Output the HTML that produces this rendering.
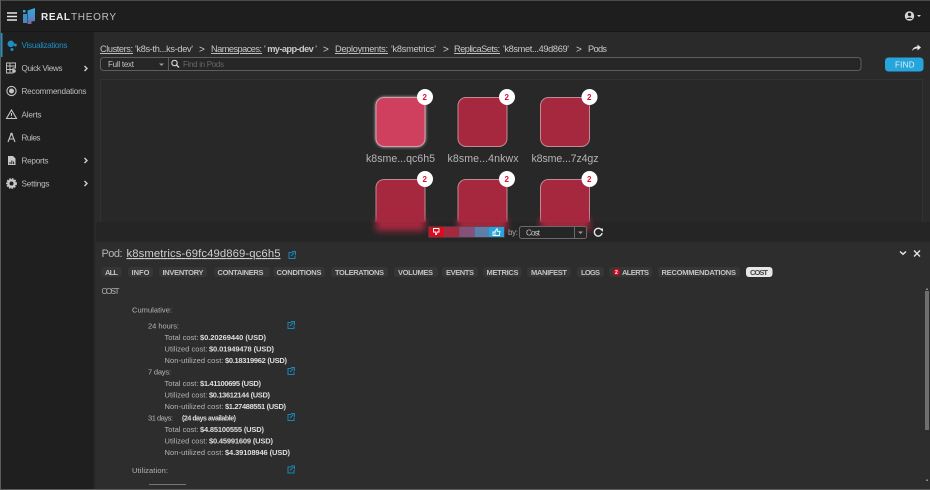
<!DOCTYPE html>
<html lang="en"><head><meta charset="utf-8"><title>RealTheory</title>
<style>
html,body{margin:0;padding:0;background:#2a2a2a;width:930px;height:490px;overflow:hidden}
svg{display:block;filter:blur(.35px)}
text{font-family:"Liberation Sans",sans-serif;font-size:8px;fill:#c8c8c8}
.nav{font-size:8.2px;fill:#bdbdbd}
.bc{font-size:9.2px;fill:#c9c9c9}
.gt{font-size:10px;fill:#c9c9c9}
.u{text-decoration:underline}
.tab{font-size:7.5px;font-weight:bold;fill:#c2c2c2}
.c{font-size:7.5px;fill:#b5b5b5}
.b{font-size:7.5px;font-weight:bold;fill:#dedede}
.pl{font-size:10.6px;fill:#b5b5b5}
.ic{fill:none;stroke:#c4c4c4;stroke-width:1.1}
.l{fill:none;stroke:#1a85b5;stroke-width:1}
</style></head><body>
<svg width="930" height="490" viewBox="0 0 930 490" xmlns="http://www.w3.org/2000/svg">
<defs><filter id="bl" x="-40%" y="-60%" width="180%" height="220%"><feGaussianBlur stdDeviation="3.500"/></filter>
<filter id="gl" x="-30%" y="-30%" width="160%" height="160%"><feGaussianBlur stdDeviation="1.600"/></filter>
<linearGradient id="lg" x1="0" y1="0" x2="0" y2="1"><stop offset="0" stop-color="#2fa8e0"/><stop offset=".6" stop-color="#4c8cc6"/><stop offset="1" stop-color="#8a5f96"/></linearGradient></defs>
<rect width="930" height="490" fill="#2a2a2a"/>
<!-- top bar -->
<rect width="930" height="32" fill="#1e1e1e"/><rect width="930" height="1" fill="#4a4a4a"/><rect y="31" width="930" height="1" fill="#171717"/>
<path d="M7 13h10M7 16.500h10M7 20h10" stroke="#e6e6e6" stroke-width="1.500"/>
<rect x="23" y="10" width="2.500" height="2.500" fill="#42a5d8"/><rect x="23" y="14" width="4" height="9" fill="#3b8fc4"/>
<path d="M27.500 10.500 L35 8 V21 L31.500 21.500 V24 H27.500Z" fill="url(#lg)"/>
<text x="41" y="20" textLength="29" style="font-size:10px;fill:#ececec;font-weight:bold">REAL</text>
<text x="71" y="20" textLength="45" style="font-size:10px;fill:#c0c0c0">THEORY</text>
<circle cx="909.500" cy="16" r="4.700" fill="#d6d6d6"/><circle cx="909.500" cy="14.500" r="1.700" fill="#1e1e1e"/><path d="M906.500 19c.6-2 5.400-2 6 0" fill="#1e1e1e"/><path d="M917 15h4l-2 2z" fill="#d6d6d6"/>
<!-- sidebar -->
<rect y="32" width="94" height="458" fill="#1f1f1f"/><rect y="0" width="1" height="490" fill="#5c5c5c"/><rect x="1" y="33" width="1.500" height="24" fill="#1c93cc"/>
<circle cx="10.800" cy="43.800" r="3.300" fill="#1b8fc4"/><circle cx="15.300" cy="45" r="1.500" fill="#1b8fc4"/><circle cx="12" cy="49.500" r="1.500" fill="#1b8fc4"/>
<text x="21.500" y="48" textLength="46" class="nav" style="fill:#1b8fc4">Visualizations</text>
<path class="ic" style="stroke-width:.9" d="M6.500 63h9v5h-2.500v5h-6.500zM6.500 66h9M10 63v10M6.500 69.500h6"/><circle cx="14" cy="71" r="1.800" fill="#c4c4c4"/>
<text x="21.500" y="71" textLength="41" class="nav">Quick Views</text>
<path class="ic" style="stroke-width:1.400;stroke:#d0d0d0" d="M84.500 66l2.500 2.500-2.500 2.500"/>
<circle cx="11.500" cy="91" r="4.600" class="ic"/><circle cx="11.500" cy="91" r="2.500" fill="#c4c4c4"/>
<text x="21.500" y="94" textLength="65" class="nav">Recommendations</text>
<path class="ic" d="M11.500 110l5 8.500h-10zM11.500 113v3M11.500 117v.6"/>
<text x="21.500" y="117.500" textLength="20" class="nav">Alerts</text>
<path class="ic" d="M11.500 133l-3.500 9M11.500 133l3.500 9M9 139h5"/><circle cx="11.500" cy="134" r="1.300" fill="#c4c4c4"/>
<text x="21.500" y="140.500" textLength="19" class="nav">Rules</text>
<path d="M8 156h5l2.500 2.500V165h-7.500z" fill="#c8c8c8"/><path d="M10 164v-2M11.800 164v-3.500M13.600 164v-2.500" stroke="#1f1f1f" stroke-width="1"/>
<text x="21.500" y="163.500" textLength="27" class="nav">Reports</text>
<path class="ic" style="stroke-width:1.400;stroke:#d0d0d0" d="M84.500 158l2.500 2.500-2.500 2.500"/>
<circle cx="11.500" cy="183.500" r="3.200" fill="none" stroke="#c8c8c8" stroke-width="2.400"/><circle cx="11.500" cy="183.500" r="4.700" fill="none" stroke="#c8c8c8" stroke-width="1.400" stroke-dasharray="1.700 1.100"/>
<text x="21.500" y="186.500" textLength="28" class="nav">Settings</text>
<path class="ic" style="stroke-width:1.400;stroke:#d0d0d0" d="M84.500 181l2.500 2.500-2.500 2.500"/>
<!-- breadcrumbs -->
<text x="100" y="52" textLength="33" class="bc u">Clusters:</text>
<text x="135" y="52" textLength="58" class="bc">'k8s-th...ks-dev'</text>
<text x="199" y="52.500" class="gt">&gt;</text>
<text x="211" y="52" textLength="51" class="bc u">Namespaces:</text>
<text x="264" y="52" textLength="53" class="bc">' <tspan font-weight="bold">my-app-dev</tspan> '</text>
<text x="323" y="52.500" class="gt">&gt;</text>
<text x="335" y="52" textLength="53" class="bc u">Deployments:</text>
<text x="391" y="52" textLength="45" class="bc">'k8smetrics'</text>
<text x="443" y="52.500" class="gt">&gt;</text>
<text x="454" y="52" textLength="46" class="bc u">ReplicaSets:</text>
<text x="503" y="52" textLength="66" class="bc">'k8smet...49d869'</text>
<text x="576" y="52.500" class="gt">&gt;</text>
<text x="588" y="52" textLength="19" class="bc">Pods</text>
<path d="M912 51c.6-3 3-4.500 5.500-4.500V44.500l3.500 3-3.500 3v-2c-2 0-4 .6-5.500 2.500z" fill="#e8e8e8"/>
<!-- search -->
<rect x="100.500" y="57.500" width="760.500" height="13" rx="3" fill="#262626" stroke="#5e5e5e"/>
<path d="M168.500 58v12" stroke="#5e5e5e"/>
<text x="108" y="67" textLength="26" style="font-size:8px;fill:#c4c4c4">Full text</text>
<path d="M159 63.500h5l-2.500 2.500z" fill="#9a9a9a"/>
<circle cx="174.500" cy="63" r="2.700" fill="none" stroke="#d0d0d0" stroke-width="1.200"/><path d="M176.500 65l2.500 2.500" stroke="#d0d0d0" stroke-width="1.500"/>
<text x="183" y="67" textLength="41" style="font-size:8px;fill:#686868">Find in Pods</text>
<rect x="885" y="57.500" width="38.500" height="14" rx="3.500" fill="#25a5dc"/>
<text x="895" y="67.500" textLength="19.500" style="font-size:8px;fill:#e4f3fa">FIND</text>
<!-- panel -->
<rect x="100.500" y="79.500" width="822" height="160" fill="#282828" stroke="#323232"/>
<!-- pods -->
<rect x="375.500" y="97" width="50" height="50" rx="9" fill="#fff" opacity=".7" filter="url(#gl)"/>
<rect x="376" y="97.500" width="49" height="49" rx="8" fill="#cf3f5e" stroke="#d4a0ac"/>
<g fill="#a6283f" stroke="#c08a96"><rect x="458" y="97.500" width="49" height="49" rx="8"/><rect x="540.500" y="97.500" width="49" height="49" rx="8"/>
<rect x="376" y="179.500" width="49" height="49" rx="8"/><rect x="458" y="179.500" width="49" height="49" rx="8"/><rect x="540.500" y="179.500" width="49" height="49" rx="8"/></g>
<g fill="#fff"><circle cx="425" cy="97" r="8"/><circle cx="507" cy="97" r="8"/><circle cx="589.500" cy="97" r="8"/><circle cx="425" cy="179" r="8"/><circle cx="507" cy="179" r="8"/><circle cx="589.500" cy="179" r="8"/></g>
<text x="422.500" y="100" style="font-size:8px;font-weight:bold;fill:#d9102d">2</text><text x="504.500" y="100" style="font-size:8px;font-weight:bold;fill:#d9102d">2</text><text x="587" y="100" style="font-size:8px;font-weight:bold;fill:#d9102d">2</text>
<text x="422.500" y="182" style="font-size:8px;font-weight:bold;fill:#d9102d">2</text><text x="504.500" y="182" style="font-size:8px;font-weight:bold;fill:#d9102d">2</text><text x="587" y="182" style="font-size:8px;font-weight:bold;fill:#d9102d">2</text>
<text x="366" y="162" textLength="69" class="pl">k8sme...qc6h5</text>
<text x="447.500" y="162" textLength="71" class="pl">k8sme...4nkwx</text>
<text x="531.500" y="162" textLength="67" class="pl">k8sme...7z4gz</text>
<!-- bottom legend bar -->
<rect x="96" y="222" width="834" height="20" fill="#252525"/>
<g filter="url(#bl)"><rect x="376" y="218" width="49" height="13" fill="#a6283f"/><rect x="458" y="218" width="49" height="13" fill="#a6283f"/><rect x="540.500" y="218" width="49" height="13" fill="#a6283f"/></g>
<rect x="376" y="220" width="49" height="2.500" fill="#a6283f"/><rect x="458" y="220" width="49" height="2.500" fill="#a6283f"/><rect x="540.500" y="220" width="49" height="2.500" fill="#a6283f"/>
<rect x="428.500" y="226.500" width="76" height="11" fill="#555"/>
<rect x="429" y="227" width="15" height="10" fill="#dc0a1e"/><rect x="444.500" y="227" width="14.500" height="10" fill="#a6283f"/><rect x="459.500" y="227" width="14.500" height="10" fill="#85507a"/><rect x="474.500" y="227" width="14.500" height="10" fill="#5c7ea8"/><rect x="489" y="227" width="15" height="10" fill="#26a5dc"/>
<path d="M433.500 228.500h5.500v3.500h-1.800l-.7 2.500h-.8v-2.500h-2.200z" fill="none" stroke="#fff" stroke-width=".9"/>
<path d="M493 232h2v3.500h-2zM495 232l1.500-3h.8v2.300h2.700l-.6 4.200h-4.400" fill="none" stroke="#fff" stroke-width=".9"/>
<text x="508" y="235" textLength="10" style="font-size:8px;fill:#a8a8a8">by:</text>
<rect x="519.500" y="226.500" width="67" height="12" rx="2" fill="#262626" stroke="#6a6a6a"/><path d="M574.500 227v11" stroke="#6a6a6a"/>
<text x="526" y="235.500" textLength="14" style="font-size:8px;fill:#c4c4c4">Cost</text>
<path d="M578 231.500h5l-2.500 2.500z" fill="#9a9a9a"/>
<path d="M601.500 230a3.900 3.900 0 1 0 .6 3" fill="none" stroke="#e4e4e4" stroke-width="1.400"/><path d="M599.500 228.500h3.500v3.500z" fill="#e4e4e4"/>
<!-- pod panel -->
<rect x="96" y="242" width="834" height="248" fill="#2d2d2d"/>
<text x="101.500" y="257" textLength="21" style="font-size:11px;fill:#b5b5b5">Pod:</text>
<text x="126.500" y="257" textLength="154" style="font-size:11.300px;fill:#cfcfcf;text-decoration:underline">k8smetrics-69fc49d869-qc6h5</text>
<g class="l"><path d="M292.500 252.500h-3.500v6h6v-3M291 256l3.500-3.500M292 251.500h3.500v3.500"/></g>
<path d="M900 251.500l3 2.700 3-2.700" fill="none" stroke="#e4e4e4" stroke-width="1.500"/>
<path d="M914 250.500l6 6M920 250.500l-6 6" stroke="#e4e4e4" stroke-width="1.400"/>
<!-- tabs -->
<g fill="#363636">
<rect x="101.500" y="267" width="20" height="10" rx="3"/><rect x="128" y="267" width="25" height="10" rx="3"/><rect x="159" y="267" width="48" height="10" rx="3"/><rect x="214" y="267" width="56" height="10" rx="3"/><rect x="273" y="267" width="52" height="10" rx="3"/><rect x="331" y="267" width="57" height="10" rx="3"/><rect x="394" y="267" width="44" height="10" rx="3"/><rect x="442" y="267" width="36" height="10" rx="3"/><rect x="483" y="267" width="39" height="10" rx="3"/><rect x="527" y="267" width="44" height="10" rx="3"/><rect x="577" y="267" width="27" height="10" rx="3"/><rect x="609" y="267" width="43" height="10" rx="3"/><rect x="658" y="267" width="82" height="10" rx="3"/></g>
<rect x="746" y="267" width="26.500" height="10" rx="3" fill="#e6e6e6"/>
<text x="105" y="275" textLength="13" class="tab">ALL</text><text x="131.500" y="275" textLength="18" class="tab">INFO</text><text x="162.500" y="275" textLength="41" class="tab">INVENTORY</text><text x="217.500" y="275" textLength="46" class="tab">CONTAINERS</text><text x="276.500" y="275" textLength="45" class="tab">CONDITIONS</text><text x="335" y="275" textLength="49" class="tab">TOLERATIONS</text><text x="398" y="275" textLength="35" class="tab">VOLUMES</text><text x="446" y="275" textLength="28" class="tab">EVENTS</text><text x="486.500" y="275" textLength="32" class="tab">METRICS</text><text x="531" y="275" textLength="36" class="tab">MANIFEST</text><text x="581" y="275" textLength="19" class="tab">LOGS</text>
<circle cx="616.500" cy="272" r="3.300" fill="#dc0a1e"/><text x="615" y="274" style="font-size:5px;font-weight:bold;fill:#fff">2</text>
<text x="622" y="275" textLength="27" class="tab">ALERTS</text><text x="661.500" y="275" textLength="74.500" class="tab">RECOMMENDATIONS</text>
<text x="750" y="275" textLength="18" class="tab" style="fill:#444">COST</text>
<text x="101.500" y="294" textLength="18" style="font-size:8px;fill:#b5b5b5">COST</text>
<!-- content -->
<text x="132" y="312.500" textLength="40" class="c">Cumulative:</text>
<text x="148" y="328.500" textLength="31" class="c">24 hours:</text>
<text x="164.500" y="340" textLength="34" class="c">Total cost:</text><text x="200" y="340" textLength="66" class="b">$0.20269440 (USD)</text>
<text x="164.500" y="351.500" textLength="43" class="c">Utilized cost:</text><text x="209" y="351.500" textLength="65" class="b">$0.01949478 (USD)</text>
<text x="164.500" y="363" textLength="59" class="c">Non-utilized cost:</text><text x="225" y="363" textLength="62" class="b">$0.18319962 (USD)</text>
<text x="148" y="374.500" textLength="23" class="c">7 days:</text>
<text x="164.500" y="386" textLength="34" class="c">Total cost:</text><text x="200" y="386" textLength="61" class="b">$1.41100695 (USD)</text>
<text x="164.500" y="397.500" textLength="43" class="c">Utilized cost:</text><text x="209" y="397.500" textLength="61" class="b">$0.13612144 (USD)</text>
<text x="164.500" y="409" textLength="59" class="c">Non-utilized cost:</text><text x="225" y="409" textLength="61" class="b">$1.27488551 (USD)</text>
<text x="148" y="420.500" textLength="25" class="c">31 days:</text><text x="182" y="420.500" textLength="54" class="b" style="font-size:7px">(24 days available)</text>
<text x="164.500" y="432" textLength="34" class="c">Total cost:</text><text x="200" y="432" textLength="64" class="b">$4.85100555 (USD)</text>
<text x="164.500" y="443.500" textLength="43" class="c">Utilized cost:</text><text x="209" y="443.500" textLength="64" class="b">$0.45991609 (USD)</text>
<text x="164.500" y="455" textLength="59" class="c">Non-utilized cost:</text><text x="225" y="455" textLength="65" class="b">$4.39108946 (USD)</text>
<text x="132" y="473" textLength="36" class="c">Utilization:</text>
<rect x="149" y="484" width="37" height="1" fill="#777"/>
<g class="l"><path d="M291.500 322.500h-3.500v6h6v-3M290 326l3.500-3.500M291 321.500h3.500v3.500"/><path d="M291.500 368.500h-3.500v6h6v-3M290 372l3.500-3.500M291 367.500h3.500v3.500"/><path d="M291.500 414.500h-3.500v6h6v-3M290 418l3.500-3.500M291 413.500h3.500v3.500"/><path d="M291.500 467h-3.500v6h6v-3M290 470.500l3.500-3.500M291 466h3.500v3.500"/></g>
<!-- scrollbar -->
<rect x="925" y="291" width="4" height="139" fill="#6e6e6e"/><rect x="926" y="288.500" width="2" height="1.500" fill="#8a8a8a"/><rect x="926" y="479.500" width="2" height="1.500" fill="#8a8a8a"/>
<rect y="489" width="930" height="1" fill="#5c5c5c"/>
</svg>
</body></html>
